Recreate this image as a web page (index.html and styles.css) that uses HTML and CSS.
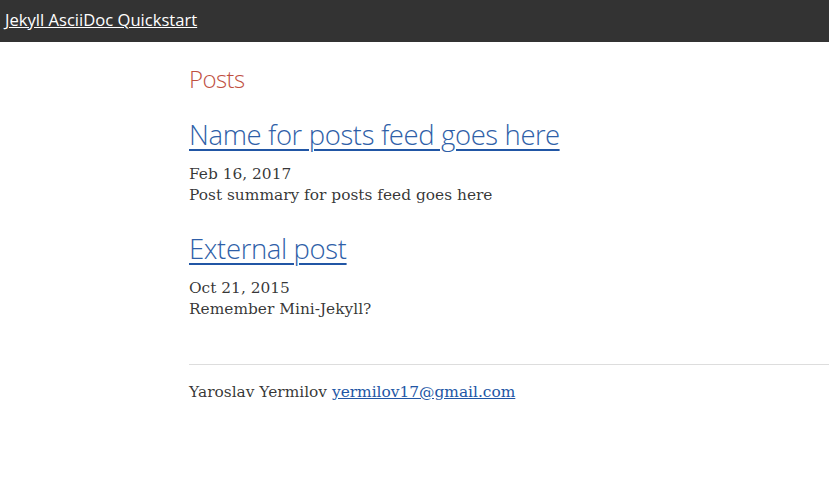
FILE: index.html
```html
<!DOCTYPE html>
<html>
<head>
<meta charset="utf-8">
<link rel="stylesheet" href="styles.css">
</head>
<body>
<header class="topbar"><a class="site-title" href="#">Jekyll AsciiDoc Quickstart</a></header>
<main class="page">
  <h1 class="page-title">Posts</h1>
  <article class="post">
    <h2 class="post-title"><a href="#">Name for posts feed goes here</a></h2>
    <div class="post-date">Feb 16, 2017</div>
    <p class="post-summary">Post summary for posts feed goes here</p>
  </article>
  <article class="post">
    <h2 class="post-title"><a href="#">External post</a></h2>
    <div class="post-date">Oct 21, 2015</div>
    <p class="post-summary">Remember Mini-Jekyll?</p>
  </article>
</main>
<footer class="footer">
  <p class="footer-text">Yaroslav Yermilov <a href="#">yermilov17@gmail.com</a></p>
</footer>
</body>
</html>
```
FILE: styles.css
```css
html, body { margin: 0; padding: 0; background: #fff; }
body {
  font-family: "DejaVu Serif", "Liberation Serif", serif;
  color: rgba(0,0,0,.8);
  font-size: 15.4px;
}
.topbar {
  background: #333;
  height: 42px;
  display: flex;
  align-items: center;
  padding-left: 5px;
}
.site-title {
  font-family: "Open Sans", sans-serif;
  font-size: 16.6px;
  color: #fff;
  text-decoration: underline;
  line-height: 1;
  margin-top: -2px;
}
.page { padding-left: 189px; padding-top: 20px; }
.page-title {
  font-family: "Open Sans Light", "Open Sans", sans-serif;
  font-weight: 300;
  font-size: 24px;
  letter-spacing: -0.6px;
  color: #c0503f;
  margin: 0;
  line-height: 34px;
}
.post { margin-top: 20px; }
.post + .post { margin-top: 24px; }
.post-title {
  font-family: "Open Sans Light", "Open Sans", sans-serif;
  font-weight: 300;
  font-size: 27.5px;
  letter-spacing: -0.38px;
  margin: 0;
  line-height: 38px;
}
.post-title a { color: #2f5fa8; text-decoration: underline; text-decoration-color: #2156a5; text-decoration-thickness: 2px; text-underline-offset: 4px; }
.post-date { line-height: 21px; margin-top: 10px; }
.post-summary { margin: 0; line-height: 21px; }
.footer { margin-left: 189px; margin-top: 44px; border-top: 1px solid #ddd; padding-top: 17px; }
.footer-text { margin: 0; line-height: 21px; }
.footer-text a { color: #2156a5; }
```
